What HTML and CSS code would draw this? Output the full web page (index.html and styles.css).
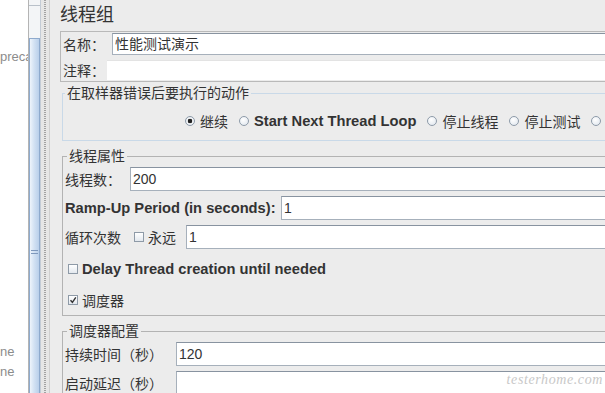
FILE: index.html
```html
<!DOCTYPE html>
<html lang="zh-CN">
<head>
    <meta charset="UTF-8">
    <meta name="viewport" content="width=device-width, initial-scale=1.0">
    <title>线程组</title>
    <link rel="stylesheet" href="styles.css">
</head>
<body>
    <div class="window">
        <div class="tree">
            <div class="tree-item">preca</div>
            <div class="tree-item tree-gap">ne</div>
            <div class="tree-item">ne</div>
        </div>
        <div class="scrollbar">
            <div class="scroll-cap"></div>
            <div class="thumb"><span class="grip"></span></div>
        </div>
        <div class="splitter"><div class="dots"></div></div>

        <div class="main">
            <h1 class="title">线程组</h1>

            <div class="name-box">
                <div class="name-row">
                    <label class="name-label">名称：</label>
                    <div class="field name-field">性能测试演示</div>
                </div>
                <div class="comment-row">
                    <label class="name-label comment-label">注释：</label>
                    <div class="comment-field"></div>
                </div>
            </div>

            <fieldset class="group error-group">
                <legend>在取样器错误后要执行的动作</legend>
                <div class="radio-row">
                    <span class="option"><span class="radio checked"></span>继续</span>
                    <span class="option bold"><span class="radio"></span>Start Next Thread Loop</span>
                    <span class="option"><span class="radio"></span>停止线程</span>
                    <span class="option"><span class="radio"></span>停止测试</span>
                    <span class="option"><span class="radio"></span>立即停止测试</span>
                </div>
            </fieldset>

            <fieldset class="group">
                <legend>线程属性</legend>
                <div class="form-row">
                    <label class="label threads-label">线程数：</label>
                    <div class="field">200</div>
                </div>
                <div class="form-row">
                    <label class="label bold ramp-label">Ramp-Up Period (in seconds):</label>
                    <div class="field">1</div>
                </div>
                <div class="form-row">
                    <label class="label loop-label">循环次数</label>
                    <span class="checkbox"></span>
                    <span class="forever">永远</span>
                    <div class="field loop-field">1</div>
                </div>
                <div class="check-row bold">
                    <span class="checkbox"></span>Delay Thread creation until needed
                </div>
                <div class="check-row">
                    <span class="checkbox">
                        <svg width="8" height="8" viewBox="0 0 8 8"><path d="M1.5 4.2 L3.4 6.3 L6.8 1.4" fill="none" stroke="#333" stroke-width="1.4"/></svg>
                    </span>调度器
                </div>
            </fieldset>

            <fieldset class="group">
                <legend>调度器配置</legend>
                <div class="form-row">
                    <label class="label schedule-label">持续时间（秒）</label>
                    <div class="field">120</div>
                </div>
                <div class="form-row">
                    <label class="label schedule-label">启动延迟（秒）</label>
                    <div class="field"></div>
                </div>
            </fieldset>
        </div>

        <div class="watermark">testerhome.com</div>
    </div>
</body>
</html>
```

FILE: styles.css
```css
* {
    box-sizing: border-box;
}
body {
    margin: 0;
    font-family: "Liberation Sans", "Noto Sans CJK SC", sans-serif;
    color: #333;
    overflow: hidden;
}
.window {
    position: relative;
    display: flex;
    width: 605px;
    height: 393px;
    overflow: hidden;
}

/* left tree, mostly hidden */
.tree {
    width: 28px;
    flex-shrink: 0;
    background: #fff;
    overflow: hidden;
    padding-top: 47px;
    font-size: 13px;
    line-height: 20px;
    color: #8c8c8c;
    white-space: nowrap;
}
.tree-gap {
    margin-top: 275px;
}

.scrollbar {
    width: 13px;
    flex-shrink: 0;
    background: #f3f5f7;
    border-left: 1px solid #b4b4b4;
    border-right: 1px solid #c3cbd5;
}
.scroll-cap {
    height: 6px;
    border-bottom: 1px solid #b9c1ca;
    margin-bottom: 32px;
}
.thumb {
    height: 400px;
    border: 1px solid #8eaacd;
    background: linear-gradient(to right, #eef4fb, #d3e2f3 45%, #b9cfea);
    display: flex;
    justify-content: center;
    padding-top: 211px;
}
.grip {
    width: 7px;
    height: 4px;
    border-top: 1px solid #7e98bc;
    border-bottom: 1px solid #7e98bc;
}

.splitter {
    width: 9px;
    flex-shrink: 0;
    background: #e6e6e6;
    border-right: 1px solid #cfcfcf;
    display: flex;
    justify-content: center;
}
.dots {
    width: 2px;
    background: repeating-linear-gradient(#a2a2a2 0 1px, transparent 1px 2px);
}

.main {
    flex: 1;
    min-width: 0;
    background: #ececec;
    padding-left: 10px;
    overflow: hidden;
}
.title {
    margin: 0;
    height: 31px;
    font-size: 18px;
    font-weight: normal;
    line-height: 30px;
}

.name-box {
    width: 570px;
    border: 1px solid #b9b9b9;
    padding: 1px 0 1px 2px;
}
.name-row {
    display: flex;
    align-items: center;
    height: 22px;
}
.comment-row {
    display: flex;
    align-items: center;
    height: 20px;
    margin-top: 5px;
}
.name-label {
    width: 49px;
    flex-shrink: 0;
    font-size: 14px;
}
.comment-label {
    width: 44px;
}
.comment-field {
    flex: 1;
    height: 20px;
    background: #fff;
    border-top: 1px solid #e3e3e3;
}

.field {
    flex: 1;
    height: 24px;
    background: #fff;
    border: 1px solid #a6b0bb;
    border-top-color: #8893a0;
    border-right: none;
    padding-left: 2px;
    font-size: 14px;
    line-height: 22px;
}
.name-field {
    height: 22px;
    line-height: 20px;
}

.group {
    width: 568px;
    min-width: 0;
    margin: 7px 0 0 2px;
    padding: 3px 0 3px 2px;
    border: 1px solid #b3b3b3;
}
.group legend {
    margin-left: 2px;
    padding: 0 2px;
    font-size: 14px;
    line-height: 16px;
}
.error-group {
    margin-top: 3px;
    padding: 10px 0 9px 0;
    border-color: #c9d9e8;
}

.radio-row {
    display: flex;
    align-items: center;
    gap: 11px;
    height: 20px;
    padding-left: 122px;
    white-space: nowrap;
}
.option {
    display: flex;
    align-items: center;
    gap: 5px;
    font-size: 14px;
}
.bold {
    font-weight: bold;
    font-size: 14.7px;
}
.radio {
    width: 10px;
    height: 10px;
    flex-shrink: 0;
    border-radius: 50%;
    border: 1px solid #8e9ba9;
    background: radial-gradient(circle at 40% 35%, #fff, #dde4ec);
}
.radio.checked {
    background: radial-gradient(circle, #222 0 2px, #f4f6f8 2.6px, #dde4ec);
}

.form-row {
    display: flex;
    align-items: center;
    height: 24px;
    margin-top: 5px;
}
.form-row:first-of-type {
    margin-top: 0;
}
.label {
    flex-shrink: 0;
    font-size: 14px;
}
.threads-label {
    width: 65px;
}
.ramp-label {
    width: 216px;
    font-size: 14.7px;
}
.loop-label {
    width: 69px;
}
.forever {
    margin-left: 4px;
    font-size: 14px;
}
.loop-field {
    margin-left: 10px;
}
.schedule-label {
    width: 111px;
}

.checkbox {
    width: 10px;
    height: 10px;
    flex-shrink: 0;
    border: 1px solid #8e9aa7;
    background: linear-gradient(#fff, #e3e8ee);
    display: flex;
    align-items: center;
    justify-content: center;
}
.check-row {
    display: flex;
    align-items: center;
    gap: 4px;
    height: 24px;
    margin-top: 7px;
    padding-left: 3px;
    font-size: 14px;
}
.check-row.bold {
    margin-top: 8px;
    font-size: 14.7px;
}

.watermark {
    position: absolute;
    right: 2px;
    bottom: 5px;
    font-family: "Liberation Serif", serif;
    font-style: italic;
    font-size: 14px;
    letter-spacing: 0.6px;
    color: #c8c8c8;
}
```
